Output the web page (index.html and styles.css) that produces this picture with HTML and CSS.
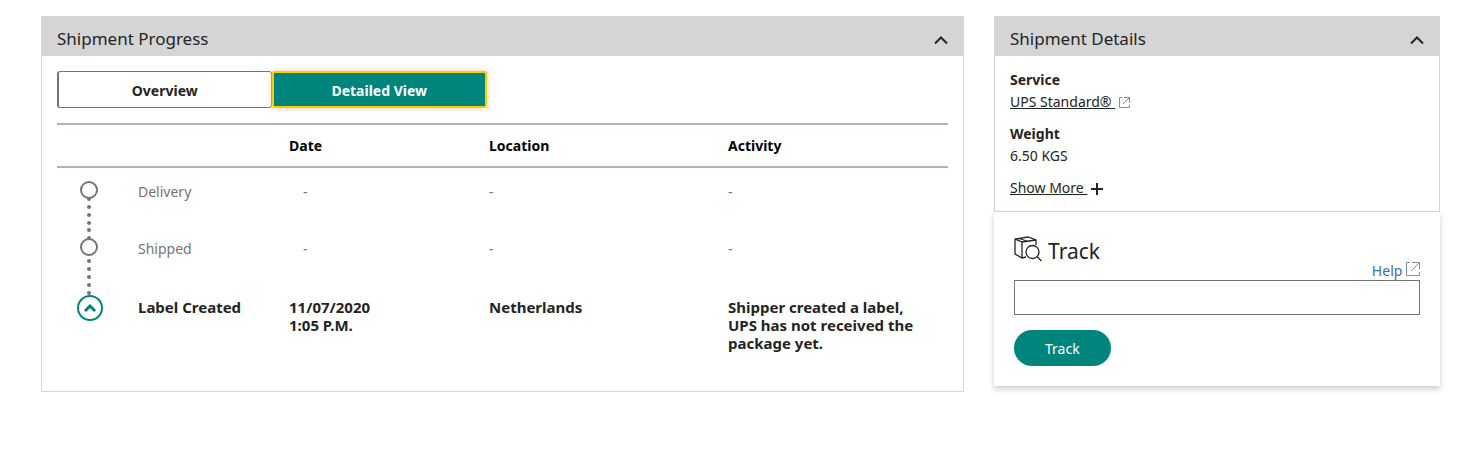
FILE: index.html
```html
<!DOCTYPE html>
<html lang="en">
<head>
  <meta charset="UTF-8">
  <title>Shipment Tracking</title>
  <meta name="viewport" content="width=device-width, initial-scale=1.0">
  <link rel="stylesheet" href="styles.css">
</head>
<body>
  <main class="page">
    <section class="panel">
      <header class="panel-header">
        <h2>Shipment Progress</h2>
        <button type="button" class="toggle" aria-label="Collapse shipment progress">
          <svg width="16" height="10" viewBox="0 0 16 10"><path d="M2 8.5 8 2.5 14 8.5"/></svg>
        </button>
      </header>
      <div class="panel-body">
        <div class="tabs">
          <button type="button" class="tab">Overview</button>
          <button type="button" class="tab active">Detailed View</button>
        </div>
        <table class="progress">
          <thead>
            <tr>
              <th class="col-mark"></th>
              <th class="col-step"></th>
              <th class="col-date">Date</th>
              <th class="col-location">Location</th>
              <th class="col-activity">Activity</th>
            </tr>
          </thead>
          <tbody>
            <tr>
              <td class="mark">
                <svg width="64" height="57" viewBox="0 0 64 57">
                  <path class="dots" d="M32 31V60"/>
                  <circle class="step" cx="32" cy="22" r="8"/>
                </svg>
              </td>
              <td>Delivery</td>
              <td class="empty-date">-</td>
              <td>-</td>
              <td>-</td>
            </tr>
            <tr>
              <td class="mark">
                <svg width="64" height="57" viewBox="0 0 64 57">
                  <path class="dots" d="M32 5V14M32 36V60"/>
                  <circle class="step" cx="32" cy="22" r="8"/>
                </svg>
              </td>
              <td>Shipped</td>
              <td class="empty-date">-</td>
              <td>-</td>
              <td>-</td>
            </tr>
            <tr class="current">
              <td class="mark">
                <svg width="64" height="57" viewBox="0 0 64 57">
                  <path class="dots" d="M32 3V12"/>
                  <circle class="now" cx="33" cy="26" r="12"/>
                  <path class="now-arrow" d="M28 29 33 24 38 29"/>
                </svg>
              </td>
              <td>Label Created</td>
              <td>11/07/2020<br>1:05 P.M.</td>
              <td>Netherlands</td>
              <td>Shipper created a label, UPS has not received the package yet.</td>
            </tr>
          </tbody>
        </table>
      </div>
    </section>

    <aside>
      <section class="panel">
        <header class="panel-header">
          <h2>Shipment Details</h2>
          <button type="button" class="toggle" aria-label="Collapse shipment details">
            <svg width="16" height="10" viewBox="0 0 16 10"><path d="M2 8.5 8 2.5 14 8.5"/></svg>
          </button>
        </header>
        <div class="details">
          <dl>
            <dt>Service</dt>
            <dd>
              <a href="#">UPS Standard®&nbsp;</a>
              <svg class="external" width="11" height="11" viewBox="0 0 11 11"><path d="M3 .5H.5V10.5H10.5V8M5 .5H10.5V6M10.5 .5 4 7"/></svg>
            </dd>
            <dt>Weight</dt>
            <dd>6.50 KGS</dd>
          </dl>
          <a href="#">Show More&nbsp;</a>
          <svg class="plus" width="12" height="12" viewBox="0 0 12 12"><path d="M6 0V12M0 6H12"/></svg>
        </div>
      </section>

      <form class="track">
        <div class="track-top">
          <label for="trackingNumber">
            <svg class="package" width="28" height="26" viewBox="0 0 28 26">
              <path d="M12 21 8 22 1 18V3L14 1 22 4V9M1 3 8 6V22M8 6 22 4M5 2.500 13 5"/>
              <circle cx="18.500" cy="16" r="6.500"/>
              <path d="M23 20.500 27.500 25"/>
            </svg>
            Track
          </label>
          <a href="#" class="help">
            Help
            <svg width="14" height="14" viewBox="0 0 14 14"><path d="M4 .5H.5V13.5H13.500V10M6 .5H13.5V7M13.5 .5 5 9"/></svg>
          </a>
        </div>
        <input type="text" id="trackingNumber">
        <button type="button" class="track-btn">Track</button>
      </form>
    </aside>
  </main>
</body>
</html>
```

FILE: styles.css
```css
:root {
  --teal: #00857d;
  --grey: #d5d5d5;
  --mid: #757575;
  --text: #242424;
  --line: #bab0a5;
  --focus: #ffcc00;
}

* {
  box-sizing: border-box;
}

body {
  margin: 0;
  font-family: Tahoma, "Noto Sans", sans-serif;
  font-size: 14px;
  line-height: 18px;
  color: var(--text);
  background: #fff;
}

svg {
  fill: none;
  stroke: currentColor;
}

button,
input {
  font-family: inherit;
  font-size: inherit;
}

button {
  cursor: pointer;
}

a {
  color: inherit;
}

.page {
  display: grid;
  grid-template-columns: 923fr 446fr;
  gap: 30px;
  padding: 16px 24px 24px 41px;
}

.panel {
  border: 1px solid var(--grey);
}

.panel-header {
  display: flex;
  justify-content: space-between;
  align-items: center;
  height: 39px;
  padding: 4px 14px 0 15px;
  background: var(--grey);
}

.panel-header h2 {
  margin: 0;
  font-size: 17px;
  font-weight: normal;
}

.toggle {
  display: flex;
  padding: 2px 0 0;
  background: none;
  border: none;
  color: var(--text);
}

.toggle svg {
  stroke-width: 2;
}

.panel-body {
  padding: 15px;
}

.tabs {
  display: flex;
  width: 430px;
  margin-bottom: 15px;
}

.tab {
  flex: 1;
  height: 37px;
  padding: 2px 0 0;
  background: #fff;
  border: 1px solid var(--mid);
  border-left-width: 2px;
  border-radius: 3px;
  font-weight: bold;
  color: var(--text);
}

.tab.active {
  background: var(--teal);
  border: 2px solid var(--focus);
  box-shadow: 0 0 6px #f3c9a0;
  color: #fff;
}

.progress {
  width: 100%;
  table-layout: fixed;
  border-collapse: separate;
  border-spacing: 0;
}

.progress th {
  height: 45px;
  padding: 0;
  border-top: 2px solid var(--line);
  border-bottom: 2px solid var(--line);
  text-align: left;
  color: #000;
}

.progress .col-mark {
  width: 81px;
}

.progress .col-step {
  width: 151px;
}

.progress .col-date {
  width: 200px;
}

.progress .col-location {
  width: 239px;
}

.progress td {
  padding: 15px 28px 0 0;
  vertical-align: top;
  color: var(--mid);
}

.progress .mark {
  padding: 0;
}

.mark svg {
  display: block;
}

.progress .empty-date {
  padding-left: 14px;
}

.progress .current td {
  padding: 16px 28px 24px 0;
  font-size: 15px;
  font-weight: bold;
  color: var(--text);
}

.progress .current .mark {
  padding: 0;
}

.dots {
  stroke: var(--mid);
  stroke-width: 4;
  stroke-linecap: round;
  stroke-dasharray: 0 8;
}

.step {
  fill: #fff;
  stroke: var(--mid);
  stroke-width: 2;
}

.now {
  fill: #fff;
  stroke: var(--teal);
  stroke-width: 2;
}

.now-arrow {
  stroke: var(--teal);
  stroke-width: 3;
}

.details {
  padding: 15px 15px 14px;
}

.details dl {
  margin: 0;
}

.details dt {
  font-weight: bold;
}

.details dd {
  margin: 4px 0 14px;
}

.external {
  color: #8a8a8a;
  vertical-align: -1px;
}

.plus {
  stroke-width: 2;
  vertical-align: -2px;
}

.track {
  padding: 20px;
  background: #fff;
  box-shadow: 0 3px 6px rgba(0, 0, 0, 0.2);
}

.track-top {
  display: flex;
  justify-content: space-between;
  align-items: flex-end;
  height: 48px;
}

.track-top label {
  display: flex;
  gap: 6px;
  align-self: flex-start;
  font-size: 21px;
  line-height: 38px;
}

.package {
  margin-top: 4px;
  stroke-width: 1.3;
}

.help {
  color: #426da9;
  text-decoration: none;
}

.help svg {
  stroke: #7a8fb5;
  vertical-align: 0;
}

.track input {
  display: block;
  width: 100%;
  height: 35px;
  padding: 0 8px;
  border: 1px solid var(--mid);
}

.track-btn {
  height: 36px;
  margin-top: 15px;
  padding: 0 31px;
  background: var(--teal);
  border: none;
  border-radius: 18px;
  color: #fff;
}
```
